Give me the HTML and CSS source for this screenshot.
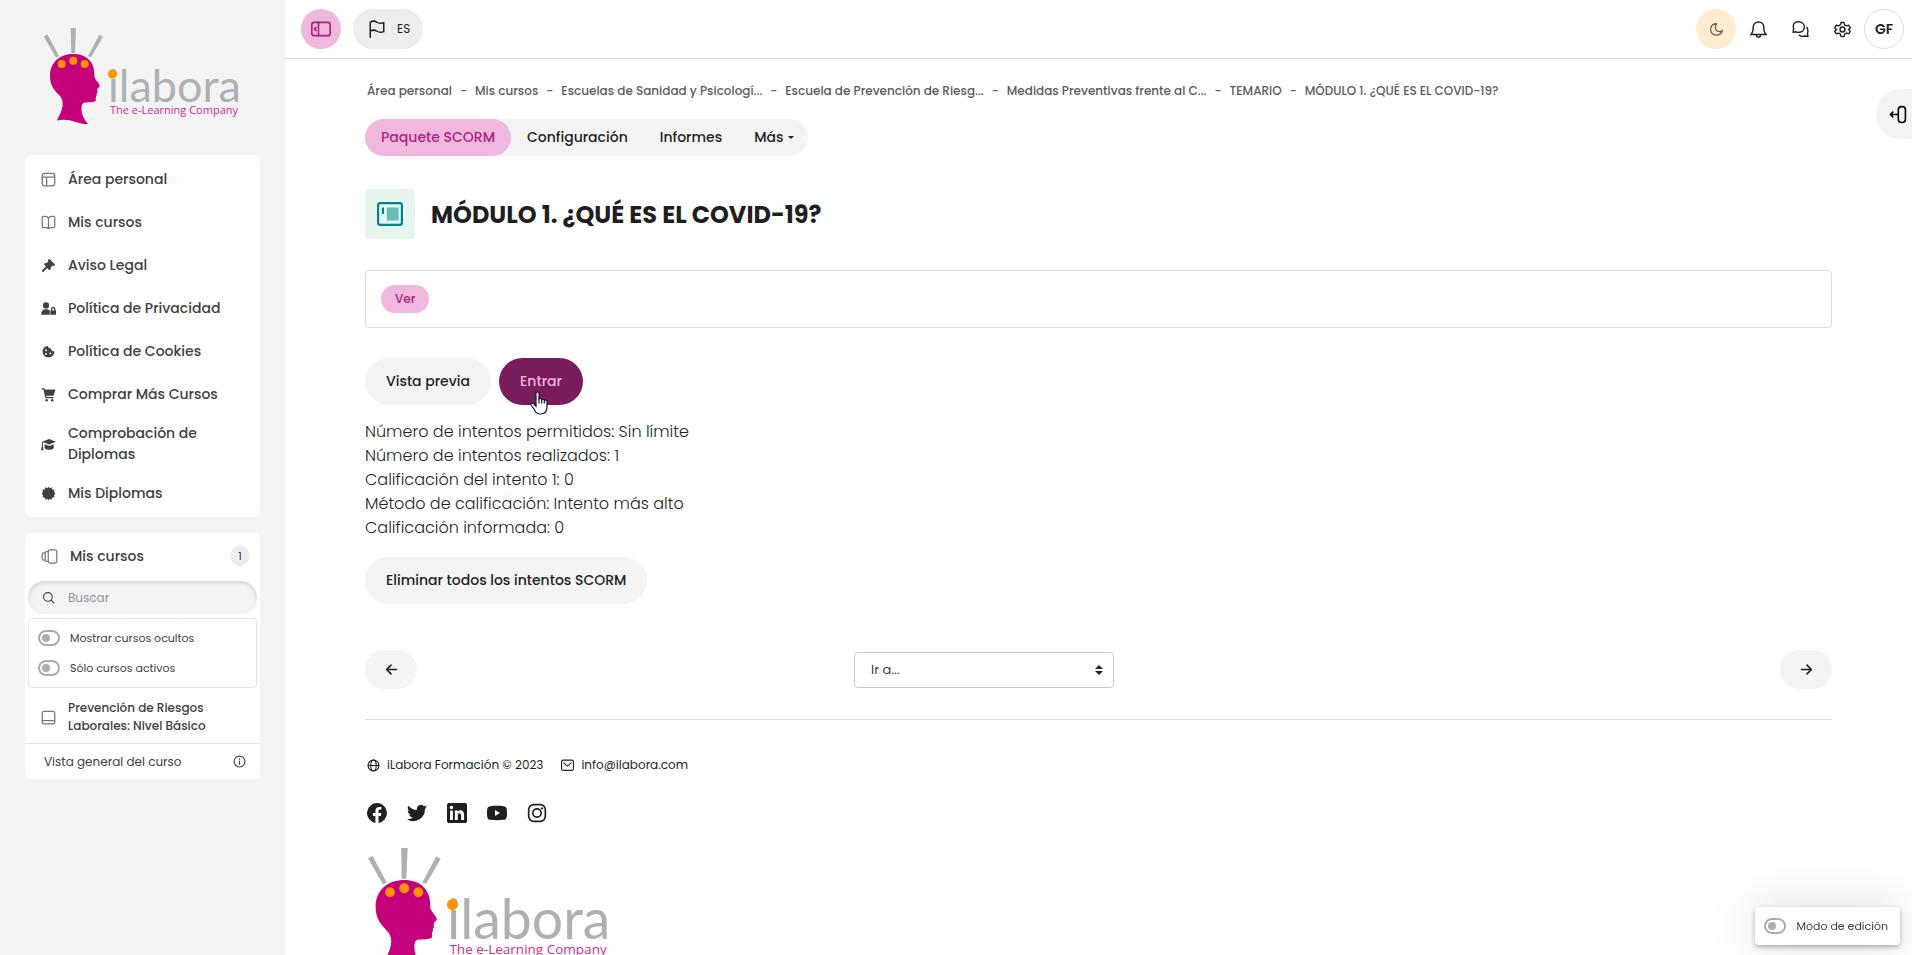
FILE: index.html
```html
<!DOCTYPE html>
<html lang="es">
<head>
    <meta charset="UTF-8">
    <meta name="viewport" content="width=device-width, initial-scale=1.0">
    <title>MÓDULO 1. ¿QUÉ ES EL COVID-19?</title>
    <link rel="stylesheet" href="styles.css">
</head>
<body>

    <div class="page">

        <aside class="sidebar">
            <a href="#" class="logo">
                <svg viewBox="0 0 200 97" role="img" aria-label="iLabora">
                    <path fill="#adb1b3" d="M.7 8.300L4.500 6.500 16 28l-3 1.400zM27.700 0H33l-1 25h-3.700zM56.300 6.700L60 8.700 48 29.300 45 28z"/>
                    <path fill="#c4007a" d="M30.500 26C17 26 7 34 7 48c0 9 4 14 9 19 3.500 3.500 4 7 3.500 11-.5 5-3 9-5.500 14.500 7-1.500 13-.5 18 1.200 5 1.600 9 2.500 13 2.300-4-4.500-6.500-10-6.500-15.500 0-3.500 1-6 4-6 4-.2 8-.3 10-1.500 1-1.200-.2-3 .5-4.500.6-1 1-1.500.4-2.500l1.100-1.500c-.5-1 .1-1.700-.2-3-.2-1.400 2.900-2.400 2.400-4-.8-3-5.200-6-5.400-9.500C52.500 34 43 26 30.500 26z"/>
                    <g fill="#ff9300">
                        <circle cx="18.700" cy="36" r="4"/>
                        <circle cx="30.300" cy="32.700" r="4"/>
                        <circle cx="41.700" cy="36" r="4"/>
                    </g>
                    <text class="logo-name" x="65" y="74">ilabora</text>
                    <text class="logo-claim" x="67" y="86">The e-Learning Company</text>
                    <circle cx="69.500" cy="46" r="4.500" fill="#ff9300"/>
                </svg>
            </a>

            <nav class="card menu">
                <a href="#">
                    <svg class="line" viewBox="0 0 24 24"><rect x="2" y="2" width="20" height="20" rx="4"/><path d="M2 8h20M9 8v14"/></svg>
                    <span>Área personal</span>
                </a>
                <a href="#">
                    <svg class="line" viewBox="0 0 24 24"><path d="M12 5c-1-2-3-3-5-3H4C3 2 2 3 2 4v14c0 1 1 2 2 2h4c2 0 3 1 4 2 1-1 2-2 4-2h4c1 0 2-1 2-2V4c0-1-1-2-2-2h-3c-2 0-4 1-5 3zM12 5v17"/></svg>
                    <span>Mis cursos</span>
                </a>
                <a href="#">
                    <svg viewBox="0 0 24 24"><path d="M13 1l9.500 9.500-2.500 2.500-1.500-1-3.500 3.500 1 1.500-2.500 2.500-3.700-3.700L4.500 21.500c-2 2-4-.5-2.500-2.500l6-5.500L4.500 10 7 7.500l1.500 1L12 5l-1-1.500z"/></svg>
                    <span>Aviso Legal</span>
                </a>
                <a href="#">
                    <svg viewBox="0 0 24 24"><circle cx="8" cy="7" r="5"/><path d="M0 22c0-6 3-9 8-9 2.500 0 4.500.8 6 2v7zM16 15v-2c0-5 7-5 7 0v2h1v7h-9v-7zm2 0h3v-2c0-2-3-2-3 0z"/></svg>
                    <span>Política de Privacidad</span>
                </a>
                <a href="#">
                    <svg viewBox="0 0 24 24"><path fill-rule="evenodd" d="M11 3c1 3 2 4 5 4 0 3 2 4 5.500 5 0 5-4 9.500-9.500 9.500S2.500 17 2.500 12 6 3.500 11 3zM8 8.500a1.500 1.500 0 1 0 0 3 1.500 1.500 0 0 0 0-3zm0 6a1.500 1.500 0 1 0 0 3 1.500 1.500 0 0 0 0-3zm7-1a1.500 1.500 0 1 0 0 3 1.500 1.500 0 0 0 0-3z"/></svg>
                    <span>Política de Cookies</span>
                </a>
                <a href="#">
                    <svg viewBox="0 0 24 24"><path d="M1 2h4.500l.5 2h17l-3 10H8.500l.4 2H20v2H7L4 4H1z"/><circle cx="9" cy="21" r="2"/><circle cx="18" cy="21" r="2"/></svg>
                    <span>Comprar Más Cursos</span>
                </a>
                <a href="#">
                    <svg viewBox="0 0 24 24"><path d="M13 3l11 4.500L13 12 4 8.400 3 9.500V14l1 7H0l1.500-7V7.500zM6 11.500l7 3 7-3 .5 6c-3 4-12 4-15 0z"/></svg>
                    <span>Comprobación de Diplomas</span>
                </a>
                <a href="#">
                    <svg viewBox="0 0 24 24"><path d="M12 1l2 2.500L17 2l1 3.500 3.500.5L21 9.500l2 2.500-2 2.500.5 3.500-3.500.5-1 3.500-3-1.500-2 2.500-2-2.500L7 22l-1-3.500-3.500-.5.5-3.500L1 12l2-2.500L2.500 6 6 5.500 7 2l3 1.500z"/></svg>
                    <span>Mis Diplomas</span>
                </a>
            </nav>

            <section class="card courses">
                <div class="courses-head">
                    <svg class="line" viewBox="0 0 28 24"><rect x="12" y="1" width="14" height="22" rx="3"/><path d="M12 4H9C7 4 7 5 7 6v12c0 1 0 2 2 2h3M7 6H4C2 6 2 8 2 9v6c0 1 0 3 2 3h3"/></svg>
                    <h2>Mis cursos</h2>
                    <span class="count">1</span>
                </div>
                <label class="search">
                    <svg class="line" viewBox="0 0 24 24"><circle cx="11" cy="11" r="8"/><path d="M17 17l5 5"/></svg>
                    <input type="text" placeholder="Buscar" aria-label="Buscar">
                </label>
                <div class="filters">
                    <label><input type="checkbox" class="switch"> Mostrar cursos ocultos</label>
                    <label><input type="checkbox" class="switch"> Sólo cursos activos</label>
                </div>
                <a href="#" class="course">
                    <svg class="line" viewBox="0 0 24 24"><rect x="2" y="2" width="20" height="20" rx="3"/><path d="M2 17h20"/></svg>
                    <span>Prevención de Riesgos Laborales: Nivel Básico</span>
                </a>
                <a href="#" class="overview">
                    <span>Vista general del curso</span>
                    <svg class="line" viewBox="0 0 24 24"><circle cx="12" cy="12" r="10"/><path d="M12 11v6M12 7v1"/></svg>
                </a>
            </section>
        </aside>

        <div class="main">
            <header class="topbar">
                <button class="round pink" aria-label="Menú lateral">
                    <svg class="line" viewBox="0 0 24 24"><rect x="1" y="4" width="22" height="16" rx="3"/><path d="M9 4v16M6 10l-2 2 2 2"/></svg>
                </button>
                <button class="lang">
                    <svg class="line" viewBox="0 0 24 24"><path d="M3 23V3c3-2 6-2 9 0s6 1.500 9 .5v12c-3 1-6 1.500-9-.5s-6-2-9 0"/></svg>
                    ES
                </button>
                <div class="tools">
                    <button class="round moon" aria-label="Modo oscuro">
                        <svg class="line" viewBox="0 0 24 24"><path d="M12 2.500C3 3 1 11 3.500 16c3.500 7 15 7 18-2.500-4 3-10 2-11-3-.5-3 .2-6 1.500-8z"/></svg>
                    </button>
                    <button class="icon" aria-label="Notificaciones">
                        <svg class="line" viewBox="0 0 24 24"><path d="M1 19c2.500-2 3.500-4 3.500-10 0-10 15-10 15 0 0 6 1 8 3.500 10zM9 19c0 5 6 5 6 0"/></svg>
                    </button>
                    <button class="icon" aria-label="Mensajes">
                        <svg class="line" viewBox="0 0 24 24"><path d="M1.500 16l.8-5C.5 4 4 1 9 1s8.500 3 8.500 7.500S14 16 9 16c-1.500 0-2.500-.3-3.500-.8zM21 9c2 3 2 5 .8 8.500l.7 4.500-4-.8c-3 1-6 .6-8-1.200"/></svg>
                    </button>
                    <button class="icon" aria-label="Ajustes">
                        <svg class="line" viewBox="0 0 24 24"><circle cx="12" cy="12" r="3.500"/><path d="M10 2h4l1 3.500 2.500 1.300L21 6l2 3.500-2.500 2.500 2.500 2.500L21 18l-3.500-.8-2.500 1.300L14 22h-4l-1-3.500-2.500-1.300L3 18l-2-3.500L3.500 12 1 9.500 3 6l3.500.8L9 5.500z"/></svg>
                    </button>
                    <button class="round user">GF</button>
                </div>
            </header>

            <button class="drawer" aria-label="Abrir bloques">
                <svg class="line" viewBox="0 0 24 24"><rect x="13" y="2" width="9" height="20" rx="4"/><path d="M13 12H3M6 9l-3 3 3 3"/></svg>
            </button>

            <main class="content">
                <ol class="breadcrumb">
                    <li><a href="#">Área personal</a></li>
                    <li><a href="#">Mis cursos</a></li>
                    <li><a href="#">Escuelas de Sanidad y Psicologí...</a></li>
                    <li><a href="#">Escuela de Prevención de Riesg...</a></li>
                    <li><a href="#">Medidas Preventivas frente al C...</a></li>
                    <li><a href="#">TEMARIO</a></li>
                    <li><a href="#">MÓDULO 1. ¿QUÉ ES EL COVID-19?</a></li>
                </ol>

                <nav class="tabs">
                    <a href="#" class="active">Paquete SCORM</a>
                    <a href="#">Configuración</a>
                    <a href="#">Informes</a>
                    <a href="#" class="more">Más</a>
                </nav>

                <div class="title">
                    <span class="title-icon">
                        <svg viewBox="0 0 24 24"><rect x="1" y="2" width="22" height="20" rx="2" fill="#e6f6ef" stroke="#00838f" stroke-width="2"/><path fill="#6cb9bd" d="M9 6h11v12H9z"/><path d="M5.500 6v6" stroke="#00838f" stroke-width="2"/></svg>
                    </span>
                    <h1>MÓDULO 1. ¿QUÉ ES EL COVID-19?</h1>
                </div>

                <div class="completion"><span class="badge">Ver</span></div>

                <div class="actions">
                    <button class="btn">Vista previa</button>
                    <button class="btn enter">
                        Entrar
                        <svg class="pointer" viewBox="0 0 18 24"><path d="M6 2.500c0-2 3-2 3 0V8c1-1 2.500-.5 2.700.6 1-.8 2.300-.3 2.600.8 1.200-.8 2.700 0 2.700 1.600v5c0 5-3 7-6.500 7-4 0-5-2-6.500-5L1 14c-.5-2 1.500-2.500 3-.8l2 2z" fill="#fff" stroke="#1b1233" stroke-width="1.200"/><path d="M9 8v4.500M11.700 9v3.500M14.300 10v2.500" stroke="#1b1233" stroke-width="1.200"/></svg>
                    </button>
                </div>

                <p class="summary">
                    Número de intentos permitidos: Sin límite<br>
                    Número de intentos realizados: 1<br>
                    Calificación del intento 1: 0<br>
                    Método de calificación: Intento más alto<br>
                    Calificación informada: 0
                </p>

                <button class="btn">Eliminar todos los intentos SCORM</button>

                <div class="activity-nav">
                    <a href="#" class="arrow" aria-label="Anterior">
                        <svg class="line" viewBox="0 0 24 24"><path d="M21 12H4M11 4l-8 8 8 8"/></svg>
                    </a>
                    <div class="jump">
                        <select aria-label="Ir a">
                            <option>Ir a...</option>
                        </select>
                        <svg viewBox="0 0 8 10"><path d="M0 4l4-4 4 4zM0 6l4 4 4-4z"/></svg>
                    </div>
                    <a href="#" class="arrow next" aria-label="Siguiente">
                        <svg class="line" viewBox="0 0 24 24"><path d="M3 12h17M13 4l8 8-8 8"/></svg>
                    </a>
                </div>

                <footer class="footer">
                    <div class="contact">
                        <a href="#">
                            <svg class="line" viewBox="0 0 24 24"><circle cx="12" cy="12" r="10"/><ellipse cx="12" cy="12" rx="5" ry="10"/><path d="M2 12h20"/></svg>
                            iLabora Formación © 2023
                        </a>
                        <a href="#">
                            <svg class="line" viewBox="0 0 24 24"><rect x="1" y="2" width="22" height="19" rx="3"/><path d="M5 7l7 6 7-6"/></svg>
                            info@ilabora.com
                        </a>
                    </div>
                    <div class="social">
                        <a href="#" aria-label="Facebook">
                            <svg viewBox="0 0 24 24"><path d="M24 12a12 12 0 1 0-13.900 11.900v-8.400h-3V12h3V9.400c0-3 1.800-4.700 4.500-4.700 1.300 0 2.700.2 2.700.2v3h-1.500c-1.500 0-2 .9-2 1.900V12h3.400l-.5 3.500h-2.900v8.400A12 12 0 0 0 24 12z"/></svg>
                        </a>
                        <a href="#" aria-label="Twitter">
                            <svg viewBox="0 0 24 24"><path d="M24 4.600a10 10 0 0 1-2.800.8 5 5 0 0 0 2.200-2.700 10 10 0 0 1-3.100 1.200 4.900 4.900 0 0 0-8.400 4.500A14 14 0 0 1 1.700 3.200a4.900 4.900 0 0 0 1.500 6.500 5 5 0 0 1-2.200-.6 4.900 4.900 0 0 0 3.900 4.900 5 5 0 0 1-2.200.1 4.900 4.900 0 0 0 4.600 3.400A9.900 9.900 0 0 1 0 19.500 14 14 0 0 0 21.500 7.100 10 10 0 0 0 24 4.600z"/></svg>
                        </a>
                        <a href="#" aria-label="LinkedIn">
                            <svg viewBox="0 0 24 24"><path fill-rule="evenodd" d="M1.500 0h21L24 1.500v21L22.500 24h-21L0 22.500v-21zM3.600 9v11.500h3.500V9zm1.700-5.700a2 2 0 1 0 0 4.100 2 2 0 0 0 0-4.100zM9.400 9v11.500h3.500v-5.700c0-3.500 4-3.300 4 0v5.700h3.600v-6.400c0-6-5.500-6.500-7.600-3.500V9z"/></svg>
                        </a>
                        <a href="#" aria-label="YouTube">
                            <svg viewBox="0 0 24 24"><path fill-rule="evenodd" d="M4 3.800c5-.5 11-.5 16 0 3 .3 4 2 4 8.200s-1 7.900-4 8.200c-5 .5-11 .5-16 0-3-.3-4-2-4-8.200s1-7.900 4-8.200zM9.600 8.300v7.400l6-3.700z"/></svg>
                        </a>
                        <a href="#" aria-label="Instagram">
                            <svg class="line" viewBox="0 0 24 24"><rect x="2" y="2" width="20" height="20" rx="6"/><circle cx="12" cy="12" r="5"/><path d="M17.500 6.500h1"/></svg>
                        </a>
                    </div>
                    <a href="#" class="logo footer-logo">
                        <svg viewBox="0 0 200 97" role="img" aria-label="iLabora">
                            <path fill="#adb1b3" d="M.7 8.300L4.500 6.500 16 28l-3 1.400zM27.700 0H33l-1 25h-3.700zM56.300 6.700L60 8.700 48 29.300 45 28z"/>
                            <path fill="#c4007a" d="M30.500 26C17 26 7 34 7 48c0 9 4 14 9 19 3.500 3.500 4 7 3.500 11-.5 5-3 9-5.500 14.500 7-1.500 13-.5 18 1.200 5 1.600 9 2.500 13 2.300-4-4.500-6.500-10-6.500-15.500 0-3.500 1-6 4-6 4-.2 8-.3 10-1.500 1-1.200-.2-3 .5-4.500.6-1 1-1.500.4-2.500l1.100-1.500c-.5-1 .1-1.700-.2-3-.2-1.400 2.900-2.400 2.400-4-.8-3-5.200-6-5.400-9.500C52.500 34 43 26 30.500 26z"/>
                            <g fill="#ff9300">
                                <circle cx="18.700" cy="36" r="4"/>
                                <circle cx="30.300" cy="32.700" r="4"/>
                                <circle cx="41.700" cy="36" r="4"/>
                            </g>
                            <text class="logo-name" x="65" y="74">ilabora</text>
                            <text class="logo-claim" x="67" y="86">The e-Learning Company</text>
                            <circle cx="69.500" cy="46" r="4.500" fill="#ff9300"/>
                        </svg>
                    </a>
                </footer>
            </main>
        </div>

        <label class="edit-mode"><input type="checkbox" class="switch"> Modo de edición</label>
    </div>

</body>
</html>
```

FILE: styles.css
```css
* {
    box-sizing: border-box;
}

body {
    margin: 0;
    font-family: Poppins, Inter, "Open Sans", sans-serif;
    font-size: 14px;
    color: #1f1f1f;
    background-color: #fff;
}

a {
    color: inherit;
    text-decoration: none;
}

button {
    padding: 0;
    border: none;
    background: none;
    font: inherit;
    color: inherit;
    cursor: pointer;
}

h1, h2, p, ol {
    margin: 0;
    padding: 0;
}

svg {
    display: block;
    flex: none;
    fill: currentColor;
}

svg.line {
    fill: none;
    stroke: currentColor;
    stroke-width: 2;
    stroke-linecap: round;
    stroke-linejoin: round;
}

.page {
    display: flex;
    height: 100vh;
    overflow: hidden;
}

/* sidebar */
.sidebar {
    flex: none;
    width: 285px;
    padding: 28px 25px;
    overflow-y: auto;
    scrollbar-width: none;
    background-color: #f4f4f4;
    color: #404040;
}

.logo {
    display: block;
    width: 200px;
    margin: 0 18px 30px;
}

.logo svg {
    width: 100%;
    overflow: visible;
}

.logo-name {
    font-family: Lato, sans-serif;
    font-size: 45px;
    fill: #adb1b3;
}

.logo-claim {
    font-family: "Open Sans", sans-serif;
    font-size: 11px;
    fill: #cf2a92;
}

.card {
    background-color: #fff;
    border-radius: 6px;
    margin-bottom: 16px;
}

.menu {
    padding: 3px 0 2px;
    font-weight: 500;
    line-height: 21px;
}

.menu a {
    display: flex;
    align-items: center;
    gap: 12px;
    min-height: 43px;
    padding: 7px 32px 7px 16px;
}

.menu svg {
    width: 15px;
    height: 15px;
}

.menu span {
    flex: 1;
}

.menu svg.line,
.course svg {
    color: #777;
}

.courses-head {
    display: flex;
    align-items: center;
    gap: 12px;
    height: 48px;
    padding: 0 10px 2px 16px;
}

.courses-head svg {
    width: 17px;
    height: 15px;
    color: #777;
}

.courses-head h2 {
    flex: 1;
    font-size: 14px;
    font-weight: 500;
}

.count {
    width: 20px;
    height: 20px;
    border-radius: 50%;
    background-color: #eee;
    font-size: 11px;
    line-height: 20px;
    text-align: center;
}

.search {
    display: flex;
    align-items: center;
    gap: 13px;
    height: 33px;
    margin: 0 3px 4px;
    padding: 0 14px;
    border-radius: 17px;
    background-color: #f4f4f4;
    box-shadow: inset 0 2px 4px rgba(0, 0, 0, 0.15);
}

.search svg {
    width: 13px;
    height: 13px;
}

.search input {
    width: 100%;
    min-width: 0;
    padding: 0;
    border: none;
    outline: none;
    background: none;
    font: inherit;
    font-size: 12px;
}

.search input::placeholder {
    color: #8c959d;
}

.filters {
    display: flex;
    flex-direction: column;
    gap: 14px;
    margin: 0 3px;
    padding: 11px 9px;
    border: 1px solid #e4e4e4;
    border-radius: 4px;
}

.filters label {
    display: flex;
    align-items: center;
    gap: 10px;
    height: 16px;
    font-size: 11px;
    white-space: nowrap;
}

.switch {
    appearance: none;
    flex: none;
    display: flex;
    align-items: center;
    width: 22px;
    height: 16px;
    margin: 0;
    padding: 0 2px;
    border: 2px solid #adadad;
    border-radius: 8px;
    background-color: #fff;
}

.switch::before {
    content: '';
    width: 8px;
    height: 8px;
    border-radius: 50%;
    background-color: #adadad;
}

.switch:checked {
    justify-content: flex-end;
}

.course {
    display: flex;
    align-items: center;
    gap: 12px;
    padding: 11px 16px 8px;
    font-size: 12px;
    font-weight: 500;
    line-height: 18px;
}

.course svg {
    width: 15px;
    height: 15px;
}

.overview {
    display: flex;
    align-items: center;
    justify-content: space-between;
    height: 36px;
    padding: 0 14px 0 19px;
    border-top: 1px solid #e4e4e4;
    font-size: 12px;
}

.overview svg {
    width: 13px;
    height: 13px;
}

/* top bar */
.main {
    position: relative;
    flex: 1;
    min-width: 0;
    display: flex;
    flex-direction: column;
}

.topbar {
    flex: none;
    display: flex;
    align-items: center;
    gap: 12px;
    height: 59px;
    padding: 0 8px 0 16px;
    border-bottom: 1px solid #dedede;
}

.round {
    display: flex;
    align-items: center;
    justify-content: center;
    width: 40px;
    height: 40px;
    border-radius: 50%;
}

.pink {
    background-color: #f1b8df;
    color: #a9247f;
}

.pink svg {
    width: 20px;
    height: 20px;
}

.lang {
    display: flex;
    align-items: center;
    gap: 11px;
    height: 40px;
    padding: 0 13px 0 15px;
    border-radius: 20px;
    background-color: #eee;
    font-size: 12px;
}

.lang svg {
    width: 18px;
    height: 18px;
}

.tools {
    display: flex;
    align-items: center;
    gap: 2px;
    margin-left: auto;
}

.moon {
    background-color: #ffecd1;
    color: #6b5d4b;
}

.moon svg {
    width: 15px;
    height: 15px;
}

.icon {
    display: flex;
    align-items: center;
    justify-content: center;
    width: 40px;
    height: 40px;
}

.icon svg {
    width: 17px;
    height: 17px;
}

.user {
    border: 1px solid #dedede;
    font-weight: 600;
}

.drawer {
    position: absolute;
    top: 89px;
    right: 0;
    display: flex;
    align-items: center;
    width: 36px;
    height: 50px;
    padding-left: 12px;
    border-radius: 25px 0 0 25px;
    background-color: #f4f4f4;
    color: #000;
}

.drawer svg {
    width: 19px;
    height: 19px;
}

/* content */
.content {
    flex: 1;
    padding: 21px 80px 40px;
    overflow-y: auto;
    scrollbar-width: none;
}

.breadcrumb {
    display: flex;
    padding-left: 2px;
    list-style: none;
    font-size: 12px;
    font-weight: 500;
    line-height: 22px;
    color: #5c5c5c;
    white-space: nowrap;
}

.breadcrumb li + li::before {
    content: '-';
    margin: 0 8px;
}

.tabs {
    display: flex;
    width: fit-content;
    margin-top: 17px;
    border-radius: 19px;
    background-color: #f4f4f4;
    font-weight: 500;
    line-height: 37px;
}

.tabs a {
    padding: 0 16px;
    border-radius: 19px;
}

.tabs .active {
    background-color: #f1b8df;
    color: #a9247f;
}

.tabs .more {
    display: flex;
    align-items: center;
    gap: 5px;
    padding-right: 14px;
}

.more::after {
    content: '';
    border: 3px solid transparent;
    border-top-color: currentColor;
    border-bottom: 0;
}

.title {
    display: flex;
    align-items: center;
    gap: 16px;
    margin-top: 33px;
}

.title-icon {
    display: flex;
    align-items: center;
    justify-content: center;
    width: 50px;
    height: 50px;
    border-radius: 4px;
    background-color: #e6f6ef;
}

.title-icon svg {
    width: 26px;
    height: 26px;
}

h1 {
    font-size: 24px;
    font-weight: 700;
}

.completion {
    margin: 31px 0 30px;
    padding: 14px 15px;
    border: 1px solid #dedede;
    border-radius: 4px;
}

.badge {
    display: block;
    width: fit-content;
    padding: 0 14px;
    border-radius: 14px;
    background-color: #f1b8df;
    color: #a9247f;
    font-size: 12px;
    font-weight: 500;
    line-height: 28px;
}

.actions {
    display: flex;
    gap: 8px;
}

.btn {
    position: relative;
    height: 47px;
    padding: 0 21px;
    border-radius: 24px;
    background-color: #f4f4f4;
    font-weight: 500;
}

.enter {
    background-color: #791c5b;
    color: #f1b8df;
}

.pointer {
    position: absolute;
    left: 31px;
    top: 33px;
    width: 18px;
    height: 24px;
}

.summary {
    margin: 15px 0 17px;
    font-size: 16px;
    font-weight: 300;
    line-height: 24px;
}

.activity-nav {
    display: grid;
    grid-template-columns: repeat(3, 1fr);
    align-items: center;
    margin-top: 46px;
}

.arrow {
    display: flex;
    align-items: center;
    justify-content: center;
    width: 52px;
    height: 39px;
    border-radius: 20px;
    background-color: #f4f4f4;
}

.next {
    justify-self: end;
}

.arrow svg {
    width: 13px;
    height: 13px;
    stroke-width: 3;
}

.jump {
    position: relative;
    width: 260px;
}

.jump select {
    appearance: none;
    display: block;
    width: 100%;
    height: 36px;
    padding: 0 16px;
    border: 1px solid #ccc;
    border-radius: 4px;
    background-color: #fff;
    color: #404040;
    font: inherit;
    font-size: 13px;
}

.jump svg {
    position: absolute;
    top: 13px;
    right: 11px;
    width: 8px;
    height: 10px;
    pointer-events: none;
}

.footer {
    margin-top: 30px;
    padding: 35px 2px 0;
    border-top: 1px solid #dedede;
}

.contact {
    display: flex;
    gap: 18px;
    font-size: 12px;
    line-height: 20px;
}

.contact a {
    display: flex;
    align-items: center;
    gap: 7px;
}

.contact svg {
    width: 13px;
    height: 13px;
}

.social {
    display: flex;
    gap: 20px;
    margin: 28px 0 25px;
}

.social svg {
    width: 20px;
    height: 20px;
}

.footer-logo {
    width: 246px;
    margin: 0;
}

.edit-mode {
    position: fixed;
    right: 12px;
    bottom: 10px;
    display: flex;
    align-items: center;
    gap: 10px;
    height: 38px;
    padding: 0 12px 0 9px;
    border-radius: 4px;
    background-color: #fff;
    box-shadow: 0 2px 5px rgba(0, 0, 0, 0.3), 0 0 50px rgba(0, 0, 0, 0.15);
    color: #404040;
    font-size: 11px;
}
```
